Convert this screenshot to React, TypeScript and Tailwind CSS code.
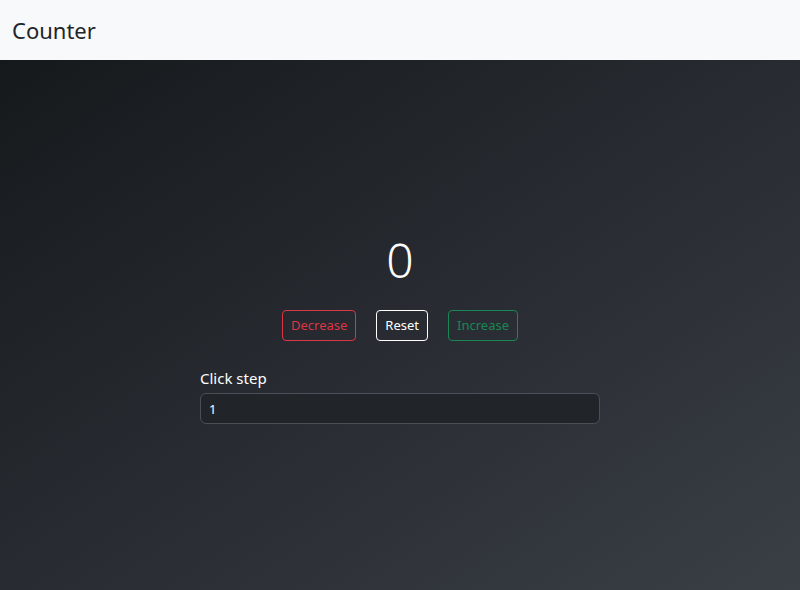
import React, { useState } from "react";

export default function App() {
  const [count, setCount] = useState(0);
  const [step, setStep] = useState("1");
  const n = Number(step) || 0;

  return (
    <div className="h-[590px] flex flex-col font-['Noto_Sans',sans-serif] overflow-hidden">
      {/* Navbar */}
      <nav className="h-[60px] shrink-0 bg-[#f8f9fa] flex items-center px-3">
        <span className="text-[22px] text-[#212529] leading-none">Counter</span>
      </nav>

      {/* Main */}
      <main className="flex-1 bg-gradient-to-br from-[#16191c] via-[#282b31] to-[#3a3f46] flex items-center justify-center">
        <div className="w-[400px] flex flex-col items-center pt-[10px]">
          <div className="text-[48px] font-light text-white leading-none mb-[26px]">{count}</div>
          <div className="flex gap-5 mb-[26px]">
            <button
              onClick={() => setCount(count - n)}
              className="h-[31px] px-2 text-[13px] rounded border border-[#dc3545] text-[#dc3545]"
            >
              Decrease
            </button>
            <button
              onClick={() => setCount(0)}
              className="h-[31px] px-2 text-[13px] rounded border border-white text-white"
            >
              Reset
            </button>
            <button
              onClick={() => setCount(count + n)}
              className="h-[31px] px-2 text-[13px] rounded border border-[#198754] text-[#198754]"
            >
              Increase
            </button>
          </div>
          <label className="self-start text-[15px] text-white mb-1">Click step</label>
          <input
            value={step}
            onChange={(e) => setStep(e.target.value)}
            className="w-full h-[31px] px-2 text-[13px] text-white bg-[#212529] border border-[#495057] rounded-md outline-none"
          />
        </div>
      </main>
    </div>
  );
}
